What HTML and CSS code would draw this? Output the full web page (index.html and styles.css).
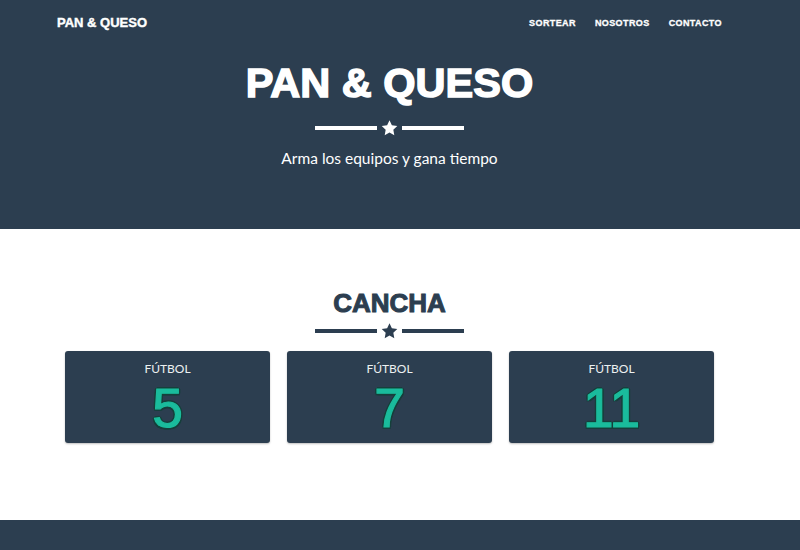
FILE: index.html
```html
<!DOCTYPE html>
<html lang="es">
<head>
<meta charset="utf-8">
<title>Pan &amp; Queso</title>
<link rel="stylesheet" href="styles.css">
</head>
<body>
<header class="top">
  <nav class="container nav">
    <a class="brand" href="#">PAN &amp; QUESO</a>
    <ul class="links">
      <li><a href="#">SORTEAR</a></li>
      <li><a href="#">NOSOTROS</a></li>
      <li><a href="#">CONTACTO</a></li>
    </ul>
  </nav>
  <div class="container hero">
    <h1 class="hero-title">PAN &amp; QUESO</h1>
    <div class="divider light">
      <span class="line"></span>
      <svg class="star" viewBox="0 0 24 23" width="17" height="16"><path d="M12 0.5l3.4 7.1 7.8 1-5.7 5.4 1.4 7.8L12 18l-6.9 3.8 1.4-7.8L0.8 8.6l7.8-1z"/></svg>
      <span class="line"></span>
    </div>
    <p class="tagline">Arma los equipos y gana tiempo</p>
  </div>
</header>
<section class="cancha">
  <div class="container">
    <h2 class="section-title">CANCHA</h2>
    <div class="divider dark">
      <span class="line"></span>
      <svg class="star" viewBox="0 0 24 23" width="17" height="16"><path d="M12 0.5l3.4 7.1 7.8 1-5.7 5.4 1.4 7.8L12 18l-6.9 3.8 1.4-7.8L0.8 8.6l7.8-1z"/></svg>
      <span class="line"></span>
    </div>
    <div class="cards">
      <div class="card"><div class="card-label">FÚTBOL</div><div class="card-num">5</div></div>
      <div class="card"><div class="card-label">FÚTBOL</div><div class="card-num">7</div></div>
      <div class="card"><div class="card-label">FÚTBOL</div><div class="card-num">11</div></div>
    </div>
  </div>
</section>
<footer class="bottom"></footer>
</body>
</html>
```
FILE: styles.css
```css
* { box-sizing: border-box; }
html, body { margin: 0; padding: 0; }
body {
  font-family: "Lato", "Liberation Sans", sans-serif;
  background: #ffffff;
  color: #2c3e50;
}
.container {
  width: 695px;
  margin-left: 42px;
}
.top {
  background: #2c3e50;
  color: #ffffff;
  height: 229px;
}
.nav {
  height: 46px;
  display: flex;
  align-items: center;
  justify-content: space-between;
  padding: 0 15px;
}
.brand {
  font-family: "Liberation Sans", Arial, sans-serif;
  font-weight: 700;
  font-size: 13px;
  line-height: 16px;
  color: #ffffff;
  text-decoration: none;
  -webkit-text-stroke: 0.4px #ffffff;
}
.links {
  list-style: none;
  margin: 0;
  padding: 0;
  display: flex;
  align-items: center;
  gap: 19px;
  font-size: 9px;
  line-height: 12px;
}
.links li { display: block; }
.links a {
  display: block;
  font-family: "Liberation Sans", Arial, sans-serif;
  font-weight: 700;
  font-size: 9px;
  line-height: 12px;
  letter-spacing: 0.4px;
  color: #ffffff;
  text-decoration: none;
  -webkit-text-stroke: 0.3px #ffffff;
}
.hero {
  text-align: center;
  padding-top: 13px;
}
.hero-title {
  margin: 0;
  font-family: "Liberation Sans", Arial, sans-serif;
  font-weight: 700;
  font-size: 41.5px;
  line-height: 48px;
  -webkit-text-stroke: 1.5px #ffffff;
}
.divider {
  display: flex;
  align-items: center;
  justify-content: center;
  gap: 4px;
}
.divider .line {
  width: 62px;
  height: 4px;
}
.divider.light .line { background: #ffffff; }
.divider.light .star { fill: #ffffff; }
.divider.dark .line { background: #2c3e50; }
.divider.dark .star { fill: #2c3e50; }
.hero .divider { margin-top: 13px; }
.tagline {
  margin: 13px 0 0;
  font-size: 15.5px;
  font-weight: 400;
}
.cancha {
  height: 291px;
  padding-top: 56px;
}
.section-title {
  margin: 0;
  text-align: center;
  font-family: "Liberation Sans", Arial, sans-serif;
  font-weight: 700;
  font-size: 26px;
  line-height: 36px;
  -webkit-text-stroke: 1px #2c3e50;
}
.cancha .divider { margin-top: 2px; }
.cards {
  display: grid;
  grid-template-columns: repeat(3, 1fr);
  gap: 17px;
  padding: 0 23px;
  margin-top: 12px;
}
.card {
  background: #2c3e50;
  border-radius: 3px;
  height: 92px;
  text-align: center;
  padding-top: 11px;
  box-shadow: 0 1px 2px rgba(0,0,0,0.25);
}
.card-label {
  color: #ecf0f1;
  font-size: 12px;
  line-height: 14px;
}
.card-num {
  font-family: "Liberation Sans", Arial, sans-serif;
  font-weight: 400;
  font-size: 55px;
  line-height: 60px;
  margin-top: 2px;
  color: #1abc9c;
  -webkit-text-stroke: 1.2px #1abc9c;
  text-shadow: 2px 0 0 #15403b, -2px 0 0 #15403b, 0 2px 0 #15403b, 0 -2px 0 #15403b,
    1.5px 1.5px 0 #15403b, -1.5px -1.5px 0 #15403b, 1.5px -1.5px 0 #15403b, -1.5px 1.5px 0 #15403b;
}
.bottom {
  background: #2c3e50;
  height: 30px;
}
```
